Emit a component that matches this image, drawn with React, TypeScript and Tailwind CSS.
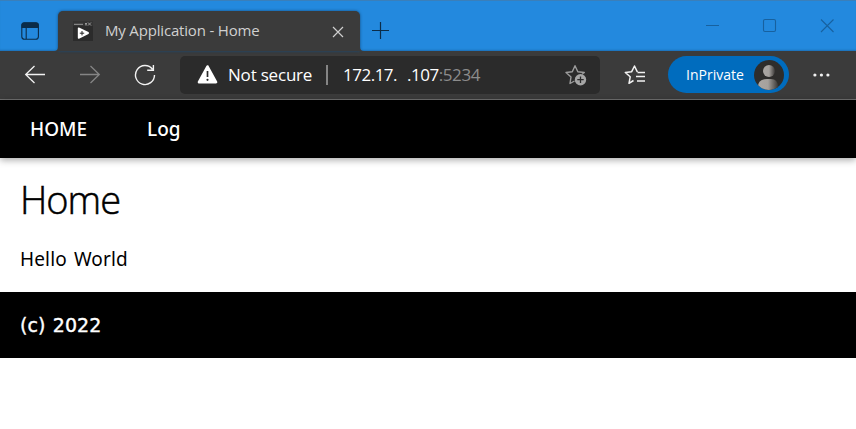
import React from "react";

function Label({ className, children }: { className: string; children: React.ReactNode }) {
  return <span className={`block whitespace-pre leading-none ${className}`}>{children}</span>;
}

function TitleBar() {
  return (
    <header className="flex h-[51px] border-t border-[#3a7fba] bg-[#2389de] shadow-[inset_0_-2px_2px_-1px_#1c6fb5]">
      <div className="w-[58px] pl-[21px] pt-[21px]">
        <svg className="block" width="19" height="19" viewBox="0 0 19 19" fill="none" stroke="#0b2c48" strokeWidth="1.1">
          <rect x="0.8" y="0.8" width="16.6" height="16.4" rx="2.8" />
          <path d="M1 4V3a2 2 0 0 1 2-2h12a2 2 0 0 1 2.200 2v2.500H1z" fill="#0b2c48" />
          <path d="M5.200 5v12" />
        </svg>
      </div>
      <div className="relative mt-[10px] flex h-10 w-[302px] rounded-t-[5px] bg-[#3b3b3b] pl-[15px] shadow-[0_0_3px_#124b7c]">
        <svg className="absolute -left-1 bottom-0" width="4" height="4" viewBox="0 0 4 4"><path d="M0 4Q4 4 4 0v4z" fill="#3b3b3b" /></svg>
        <svg className="absolute -right-1 bottom-0" width="4" height="4" viewBox="0 0 4 4"><path d="M4 4Q0 4 0 0v4z" fill="#3b3b3b" /></svg>
        <svg className="mt-[10px] block" width="20" height="20" viewBox="0 0 20 20">
          <path d="M0 0h20v20H0z" fill="#2b2b2b" />
          <path d="M0 0h20v5H0z" fill="#343434" />
          <path d="M1 3.300h9M12 2.500h2M12 3.800h2M15 1.500l3 3M18 1.500l-3 3" stroke="#999" strokeWidth="1" />
          <path d="M4.800 7.400q0-1.200 1.200-.8l9.500 4.500q1.200.9 0 1.800l-9.500 4.800q-1.200.4-1.200-.9z" fill="#fff" />
          <path d="M9 10v4.400M6.800 12.200h4.400" stroke="#222" strokeWidth="1" />
        </svg>
        <Label className="ml-3 mt-[12px] w-[211px] font-['Open_Sans',sans-serif] text-[15px] tracking-[-0.18px] text-[#d0d0d0]">My Application - Home</Label>
        <svg className="ml-4 mt-[15px] block" width="12" height="12" viewBox="0 0 12 12" stroke="#cfcfcf" strokeWidth="1.200"><path d="M1 1l10 10M11 1L1 11" /></svg>
      </div>
      <svg className="ml-3 mt-[21px] block" width="18" height="18" viewBox="0 0 18 18" stroke="#0b2c48" strokeWidth="1.200"><path d="M8.500 0v17M0 8.500h17" /></svg>
      <svg className="ml-auto mr-[21px] mt-[17px] block" width="130" height="16" viewBox="0 0 130 16" fill="none" stroke="#17619f" strokeWidth="1.100">
        <path d="M1 7.500h13M116 1.500l12.500 12.500M128.500 1.500L116 14" />
        <rect x="58.500" y="1.500" width="12" height="12" rx="1.500" />
      </svg>
    </header>
  );
}

function Toolbar() {
  return (
    <div className="flex h-[49px] items-center border-b border-[#707070] bg-[#3b3b3b] pb-px">
      <svg className="ml-6 block" width="22" height="20" viewBox="0 0 22 20" fill="none" stroke="#f2f2f2" strokeWidth="1.300"><path d="M21 9.500H2M10.500 1L1.700 9.500l8.800 8.500" /></svg>
      <svg className="ml-[33px] block" width="22" height="20" viewBox="0 0 22 20" fill="none" stroke="#858585" strokeWidth="1.300"><path d="M1 9.500h19M11.500 1l8.800 8.500-8.800 8.500" /></svg>
      <svg className="ml-[33px] block" width="22" height="22" viewBox="0 0 22 22" fill="none" stroke="#f2f2f2" strokeWidth="1.400"><path d="M18.500 5.200A9.500 9.500 0 1 0 20.500 11M19.400 1v5.300h-6.200" /></svg>
      <div className="ml-6 flex h-[38px] w-[420px] items-center rounded-[5px] bg-[#2b2b2b] pl-[17px]">
        <svg className="block" width="21" height="19" viewBox="0 0 21 19">
          <path d="M10.500 1.500L19 17.200H2z" fill="#fff" stroke="#fff" strokeWidth="2.600" strokeLinejoin="round" />
          <path d="M10.500 6v6" stroke="#2b2b2b" strokeWidth="1.700" /><circle cx="10.500" cy="14.800" r="1.100" fill="#2b2b2b" />
        </svg>
        <Label className="ml-[10px] w-[98px] font-['Open_Sans',sans-serif] text-[17px] tracking-[-0.2px] text-white">Not secure</Label>
        <div className="h-5 w-[2px] bg-[#858585]" />
        <Label className="ml-[15px] w-[64px] font-['Open_Sans',sans-serif] text-[17px] tracking-[-0.5px] text-white">172.17.</Label>
        <Label className="w-[158px] font-['Open_Sans',sans-serif] text-[17px] tracking-[-0.45px] text-white">.107<span className="text-[#8c8c8c]">:5234</span></Label>
        <svg className="block" width="22" height="22" viewBox="0 0 22 22" fill="none">
          <path d="M9.500 17L5 19.500l1-6.500L1 8.500l6.300-.8L10 1.700l2.800 6 6.500.8-2.200 1.700" stroke="#9c9c9c" strokeWidth="1.400" strokeLinejoin="round" />
          <circle cx="15.500" cy="15.700" r="5.700" fill="#a6a6a6" /><path d="M15.500 12.500v6.400M12.300 15.700h6.400" stroke="#2b2b2b" strokeWidth="1.300" />
        </svg>
      </div>
      <svg className="ml-6 block" width="22" height="22" viewBox="0 0 22 22" fill="none" stroke="#f2f2f2" strokeWidth="1.500" strokeLinejoin="round">
        <path d="M9.500 16.500L5 19.300l1.200-6.500L1.300 8.500l6.400-.8L10.500 2l2.800 5.800M13.500 8.500h7.500M12 12.500h9M13 17h8" />
      </svg>
      <div className="ml-[22px] flex h-[37px] w-[121px] items-center rounded-full bg-[#006cbe] pl-[18px]">
        <Label className="w-[68px] font-['Open_Sans',sans-serif] text-[14px] text-white">InPrivate</Label>
        <svg className="block" width="30" height="30" viewBox="0 0 30 30">
          <defs>
            <linearGradient id="person"><stop offset="0" stopColor="#aaa6a2" /><stop offset=".5" stopColor="#a5a19d" /><stop offset="1" stopColor="#3a3836" /></linearGradient>
            <clipPath id="avatar"><circle cx="15" cy="15" r="15" /></clipPath>
          </defs>
          <g clipPath="url(#avatar)"><path d="M0 0h30v30H0z" fill="#2e2d2b" /><circle cx="15" cy="11" r="6" fill="url(#person)" /><path d="M4 30v-3q0-8 9-8h4q7 0 7 8v3z" fill="url(#person)" /></g>
        </svg>
      </div>
      <svg className="ml-6 block" width="17" height="4" viewBox="0 0 17 4" fill="#f2f2f2"><circle cx="1.900" cy="2" r="1.600" /><circle cx="8.400" cy="2" r="1.600" /><circle cx="14.900" cy="2" r="1.600" /></svg>
    </div>
  );
}

export default function App() {
  return (
    <div className="h-[429px] w-[856px] overflow-hidden bg-white">
      <TitleBar />
      <Toolbar />
      <nav className="flex h-[58px] bg-black pl-[30px] pt-5 text-white shadow-[0_2px_7px_rgba(0,0,0,0.35)]">
        <Label className="w-[117px] font-['Noto_Sans',sans-serif] text-[19px] font-medium">HOME</Label>
        <Label className="font-['Noto_Sans',sans-serif] text-[19px] font-medium">Log</Label>
      </nav>
      <main className="h-[134px] pl-5 pt-[22px] text-black">
        <h1 className="font-['Open_Sans',sans-serif] text-[38px] font-light leading-none tracking-[-1px] [-webkit-text-stroke:0.5px_#000]">Home</h1>
        <p className="mt-[32px] font-['Noto_Sans',sans-serif] text-[19px] leading-none tracking-[0.15px] [word-spacing:2px]">Hello World</p>
      </main>
      <footer className="h-[66px] bg-black pl-5 pt-6 font-['DejaVu_Sans',sans-serif] text-[19px] leading-none tracking-[0.1px] text-white [-webkit-text-stroke:0.4px_#fff] [word-spacing:1px]">(c) 2022</footer>
    </div>
  );
}
